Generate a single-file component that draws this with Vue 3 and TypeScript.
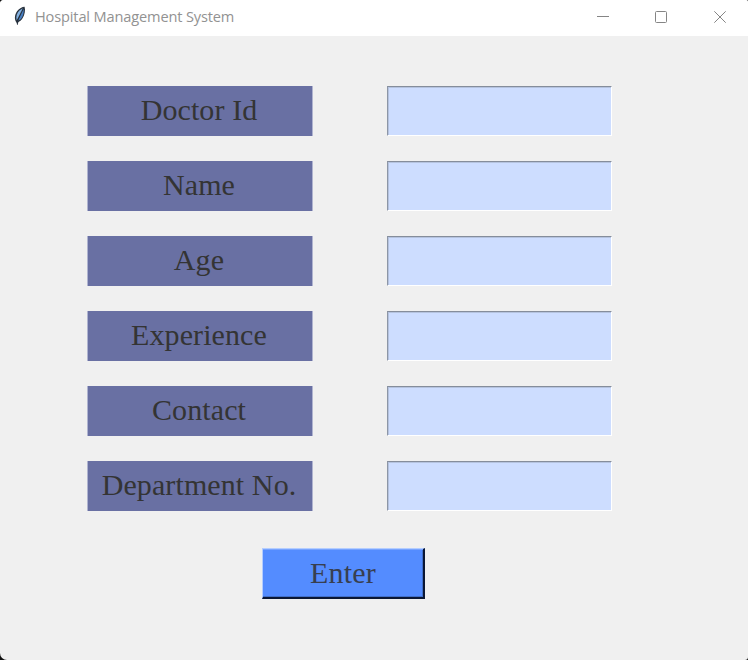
<script setup lang="ts">
import { ref } from 'vue'

interface Field {
  label: string
  value: string
}

const fields = ref<Field[]>([
  { label: 'Doctor Id', value: '' },
  { label: 'Name', value: '' },
  { label: 'Age', value: '' },
  { label: 'Experience', value: '' },
  { label: 'Contact', value: '' },
  { label: 'Department No.', value: '' },
])
</script>

<template>
  <div class="backdrop">
    <div class="window">
      <header class="titlebar">
        <svg class="feather" width="14" height="20" viewBox="0 0 14 20">
          <path d="M4.4 19 L3.4 16.4 C1.2 13.6 1.4 8.6 4.2 5 C6.4 2.4 9 .7 11.6 .7 C12.6 4 11.8 9 9.4 12.6 C7.8 15 6.6 15.6 5.2 16.2 Z" fill="#2c3540" />
          <path d="M3.6 14.2 C2.8 10.4 4 7.2 6.4 4.6 L9.8 2.2 C8.4 6.6 5.8 10.6 3.6 14.2 Z" fill="#82b0e0" />
          <path d="M5 14.4 C7 11 9 7 10.6 2.8 C11 6.4 10.2 10 8.4 12.2 C7.4 13.6 6.2 14 5 14.4 Z" fill="#477fc4" />
          <path d="M4.4 18.8 C4.6 13 7 8 10.4 2.4" fill="none" stroke="#1c2838" stroke-width=".6" />
        </svg>
        <h1 class="title">Hospital Management System</h1>
        <div class="controls">
          <svg width="12" height="12" viewBox="0 0 12 12"><path d="M0 5.5H12" /></svg>
          <svg width="12" height="12" viewBox="0 0 12 12"><rect x=".5" y=".5" width="11" height="11" rx="1" /></svg>
          <svg width="12" height="12" viewBox="0 0 12 12"><path d="M.3 .3L11.7 11.7M11.7 .3L.3 11.7" /></svg>
        </div>
      </header>
      <form class="form" @submit.prevent>
        <label v-for="field in fields" :key="field.label" class="row">
          <span class="caption">{{ field.label }}</span>
          <input v-model="field.value" class="entry" type="text" />
        </label>
        <button class="enter" type="submit">Enter</button>
      </form>
    </div>
  </div>
</template>

<style>
body {
  margin: 0;
}
</style>

<style scoped>
.backdrop {
  height: 660px;
  background: #111;
}
.window {
  display: flex;
  flex-direction: column;
  height: 100%;
  overflow: hidden;
  border-radius: 4px 2px 3px 7px;
  background: #f0f0f0;
}
.titlebar {
  display: flex;
  align-items: flex-start;
  box-sizing: border-box;
  height: 36px;
  padding: 6px 22px 0 13px;
  background: #fff;
}
.feather {
  flex: none;
}
.title {
  margin: 0 0 0 8px;
  color: #929292;
  font: 400 14.6px/20px "Open Sans", "Noto Sans", sans-serif;
  letter-spacing: -0.15px;
  white-space: nowrap;
}
.controls {
  display: flex;
  gap: 46px;
  margin: 5px 0 0 auto;
}
.controls svg {
  fill: none;
  stroke: #858585;
  stroke-width: 1;
}
.controls svg:last-child {
  margin-left: 1px;
}
.form {
  display: flex;
  flex-direction: column;
  gap: 25px;
  padding: 50px 0 0 87px;
  font-family: "Liberation Serif", "Times New Roman", serif;
}
.row {
  display: flex;
  gap: 75px;
}
.caption {
  box-sizing: border-box;
  width: 226px;
  height: 50px;
  margin-right: -1px;
  padding-right: 2px;
  border: solid #b0b4d0;
  border-width: 0 1px 0 1px;
  background: #6970a3;
  color: #343434;
  font-size: 30px;
  letter-spacing: 0.1px;
  line-height: 47px;
  text-align: center;
}
.entry {
  box-sizing: border-box;
  width: 225px;
  height: 50px;
  padding: 0 6px;
  border: 1px solid;
  border-color: #858d9b #fff #fff #8d96a6;
  border-radius: 0;
  outline: none;
  background: #cdddff;
  box-shadow: inset 1px 1px #b5c3df;
  color: #343434;
  font: inherit;
  font-size: 30px;
}
.enter {
  box-sizing: border-box;
  width: 163px;
  height: 51px;
  margin: 12px 0 0 175px;
  padding: 0;
  border: solid;
  border-width: 1px 2px 2px 1px;
  border-color: #b4cdff #0b1735 #0b1735 #b4cdff;
  border-radius: 0;
  background: #548cff;
  box-shadow: inset 0 1px #78a4ff, inset -1px -1px #416fca;
  color: #383f50;
  font: inherit;
  font-size: 30px;
  letter-spacing: 0.2px;
  line-height: 46px;
}
</style>
